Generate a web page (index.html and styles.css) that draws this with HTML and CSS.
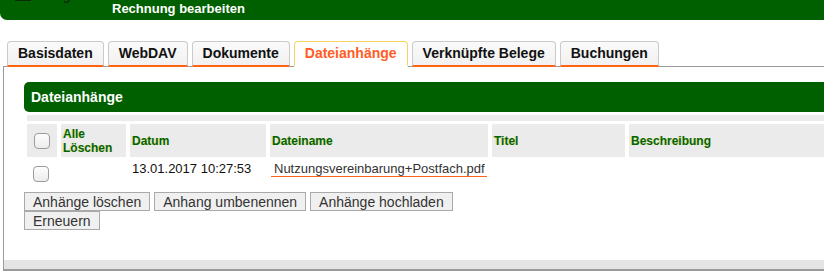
FILE: index.html
```html
<!DOCTYPE html>
<html lang="de">
<head>
  <meta charset="UTF-8">
  <title>Rechnung bearbeiten</title>
  <link rel="stylesheet" href="styles.css">
</head>
<body>
  <!-- Kopfzeile -->
  <div class="topbar">
    <div class="menu-row">
      <span class="menu-icon"></span>
      <span class="menu-text">Beleg</span>
    </div>
    <div class="page-title">Rechnung bearbeiten</div>
  </div>

  <!-- Reiter -->
  <div class="tabs">
    <a class="tab">Basisdaten</a>
    <a class="tab">WebDAV</a>
    <a class="tab">Dokumente</a>
    <a class="tab active">Dateianhänge</a>
    <a class="tab">Verknüpfte Belege</a>
    <a class="tab">Buchungen</a>
  </div>

  <div class="panel">
    <div class="panel-body">
      <div class="section-head">Dateianhänge</div>

      <table class="files">
        <colgroup>
          <col class="c-check">
          <col class="c-all">
          <col class="c-date">
          <col class="c-name">
          <col class="c-title">
          <col>
        </colgroup>
        <tr class="spacer"><td colspan="6"></td></tr>
        <tr class="head">
          <th class="first"><input type="checkbox" class="check"></th>
          <th>Alle<br>Löschen</th>
          <th>Datum</th>
          <th>Dateiname</th>
          <th>Titel</th>
          <th>Beschreibung</th>
        </tr>
        <tr class="row">
          <td class="first"><input type="checkbox" class="check"></td>
          <td></td>
          <td>13.01.2017 10:27:53</td>
          <td><span class="filename">Nutzungsvereinbarung+Postfach.pdf</span></td>
          <td></td>
          <td></td>
        </tr>
      </table>

      <div class="actions">
        <button class="btn">Anhänge löschen</button>
        <button class="btn">Anhang umbenennen</button>
        <button class="btn">Anhänge hochladen</button>
        <button class="btn">Erneuern</button>
      </div>
    </div>
    <div class="panel-foot"></div>
  </div>
</body>
</html>
```

FILE: styles.css
```css
* {
  box-sizing: border-box;
}
html, body {
  margin: 0;
  font-family: 'Liberation Sans', Arial, sans-serif;
  background: #fff;
  overflow: hidden;
}
.topbar {
  height: 20px;
  background: #006000;
  border-bottom-left-radius: 7px;
  overflow: hidden;
}
.menu-row {
  display: flex;
  align-items: flex-end;
  height: 16px;
  margin-top: -15px;
  padding-left: 15px;
  gap: 6px;
}
.menu-icon {
  width: 16px;
  height: 16px;
  background: #3cb43c;
  border: 2px solid #0a2a0a;
}
.menu-text {
  font-size: 13px;
  line-height: 15px;
  color: #111;
  margin-bottom: -2px;
}
.page-title {
  padding-left: 112px;
  font-size: 13px;
  line-height: 15px;
  font-weight: bold;
  color: #fff;
}
.tabs {
  display: flex;
  gap: 4px;
  margin: 21px 0 -1px 7px;
  position: relative;
  z-index: 1;
}
.tab {
  display: block;
  height: 26px;
  padding: 0 10px;
  line-height: 23px;
  font-size: 14px;
  font-weight: bold;
  color: #111;
  background: linear-gradient(#fafafa, #f1f1f1);
  border: 1px solid #cacaca;
  border-bottom: 2px solid #ff6414;
  border-radius: 4px 4px 0 0;
  cursor: pointer;
}
.tab.active {
  color: #ff5c26;
  background: #fff;
  border-color: #f7d462;
  border-bottom-color: #fff;
}
.panel {
  width: 900px;
  margin-left: 3px;
  border: 1px solid #9a9a9a;
  border-right: none;
}
.panel-body {
  padding: 15px 0 30px 20px;
}
.section-head {
  height: 30px;
  line-height: 30px;
  padding-left: 7px;
  background: #006000;
  border-radius: 5px;
  color: #fff;
  font-size: 14px;
  font-weight: bold;
}
.files {
  width: 880px;
  margin-left: -1px;
  border-spacing: 4px 3px;
  table-layout: fixed;
}
.files col.c-check { width: 30px; }
.files col.c-all { width: 65px; }
.files col.c-date { width: 136px; }
.files col.c-name { width: 218px; }
.files col.c-title { width: 133px; }
.files td, .files th {
  padding: 0 2px;
}
.spacer td {
  height: 6px;
  padding: 0;
  background: #ebebeb;
}
.head th {
  height: 33px;
  background: #ebebeb;
  text-align: left;
  vertical-align: middle;
  font-size: 12px;
  line-height: 14px;
  font-weight: bold;
  color: #006400;
  text-shadow: -1px 0 0 rgba(230, 200, 0, 0.35);
}
.head .first {
  text-align: center;
  padding: 0;
}
.row td {
  height: 24px;
  vertical-align: top;
  padding-top: 1px;
  font-size: 13px;
  line-height: 15px;
  color: #111;
}
.row .first {
  padding: 6px 0 0 6px;
}
.check {
  -webkit-appearance: none;
  appearance: none;
  display: block;
  width: 16px;
  height: 16px;
  margin: 0 auto;
  border: 1px solid #9c9c9c;
  border-radius: 4px;
  background: linear-gradient(#fdfdfd, #ececec);
}
.row .check {
  margin: 0;
}
.filename {
  display: block;
  margin: 0 -1px;
  padding-left: 3px;
  color: #333;
  border-bottom: 1px solid #ff6414;
}
.actions {
  display: flex;
  flex-wrap: wrap;
  column-gap: 4px;
  width: 440px;
  margin-top: 5px;
}
.btn {
  height: 19px;
  padding: 0 8px;
  font-family: 'Liberation Sans', Arial, sans-serif;
  font-size: 14px;
  line-height: 16px;
  color: #333;
  background: #f0f0f0;
  border: 1px solid #a9a9a9;
  border-radius: 0;
}
.panel-foot {
  height: 10px;
  background: #e4e4e4;
  border-bottom: 1px solid #9a9a9a;
}
```
